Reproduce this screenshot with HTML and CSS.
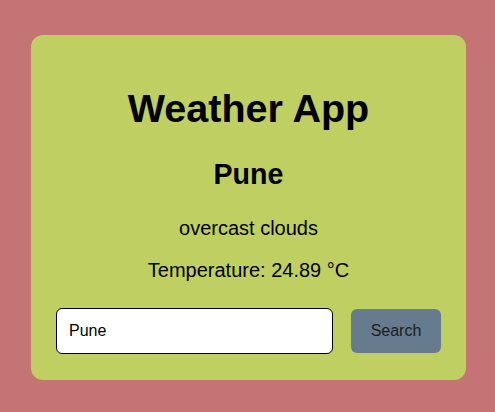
FILE: index.html
```html
<!DOCTYPE html>
<html lang="en">
<head>
<meta charset="utf-8">
<title>Weather App</title>
<link rel="stylesheet" href="styles.css">
</head>
<body>
  <main class="card">
    <h1 class="title">Weather App</h1>
    <h2 class="city">Pune</h2>
    <p class="desc">overcast clouds</p>
    <p class="temp">Temperature: 24.89 °C</p>
    <form class="search" onsubmit="return false">
      <input class="search-input" type="text" value="Pune">
      <button class="search-btn" type="submit">Search</button>
    </form>
  </main>
</body>
</html>
```
FILE: styles.css
```css
html, body {
  margin: 0;
  padding: 0;
}
body {
  background: #c47474;
  font-family: "Liberation Sans", Arial, sans-serif;
  color: #000;
  height: 412px;
  overflow: hidden;
}
.card {
  box-sizing: border-box;
  width: 435px;
  height: 345px;
  margin: 35px 0 0 31px;
  padding: 50px 25px 26px;
  background: #bfcf62;
  border-radius: 12px;
  display: flex;
  flex-direction: column;
  align-items: center;
  text-align: center;
}
.title {
  margin: 0;
  font-size: 39.5px;
  line-height: 46px;
  font-weight: bold;
}
.city {
  margin: 26px 0 0;
  font-size: 28.6px;
  line-height: 34px;
  font-weight: bold;
}
.desc {
  margin: 25.6px 0 0;
  font-size: 20px;
  line-height: 23px;
}
.temp {
  margin: 19px 0 0;
  font-size: 20px;
  line-height: 23px;
}
.search {
  margin-top: auto;
  align-self: stretch;
  display: flex;
  align-items: center;
  gap: 18px;
}
.search-input {
  box-sizing: border-box;
  width: 277px;
  height: 46px;
  margin: 0;
  padding: 0 12px;
  border: 1px solid #000;
  border-radius: 6px;
  background: #fff;
  font-family: "Liberation Sans", Arial, sans-serif;
  font-size: 16px;
  color: #000;
  outline: none;
}
.search-btn {
  box-sizing: border-box;
  width: 90px;
  height: 44px;
  margin: 0;
  padding: 0;
  border: none;
  border-radius: 6px;
  background: #677b8f;
  color: #1c1c1c;
  font-family: "Liberation Sans", Arial, sans-serif;
  font-size: 16px;
}
```
